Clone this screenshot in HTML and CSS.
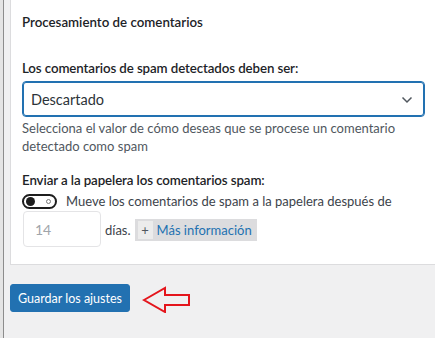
FILE: index.html
```html
<!DOCTYPE html>
<html lang="es">
<head>
  <meta charset="UTF-8">
  <title>Procesamiento de comentarios</title>
  <link rel="stylesheet" href="styles.css">
</head>
<body>
  <div class="frame">
    <div class="settings-panel">
      <h2 class="panel-title">Procesamiento de comentarios</h2>

      <label class="field-label" for="spamAction">Los comentarios de spam detectados deben ser:</label>
      <div class="select-wrap">
        <select class="select" id="spamAction">
          <option>Descartado</option>
        </select>
        <svg class="chevron" width="12" height="8" viewBox="0 0 12 8"><path d="M1.5 1.5 6 6l4.5-4.5" fill="none" stroke="#50575e" stroke-width="1.5"/></svg>
      </div>
      <p class="field-help">Selecciona el valor de cómo deseas que se procese un comentario detectado como spam</p>

      <div class="field-label trash-label">Enviar a la papelera los comentarios spam:</div>
      <div class="toggle-row">
        <span class="toggle"><span class="knob"></span><span class="off-dot"></span></span>
        <span>Mueve los comentarios de spam a la papelera después de</span>
      </div>
      <div class="days-row">
        <input class="days-input" type="text" value="14">
        <span class="days-text">días.</span>
        <a class="more-link" href="#"><span class="plus">+</span>Más información</a>
      </div>
    </div>

    <div class="actions">
      <button class="save-btn">Guardar los ajustes</button>
      <svg class="arrow" width="50" height="28" viewBox="0 0 50 28"><path d="M2 15 23 3v7h24v10H23v7z" fill="none" stroke="#e4151c" stroke-width="2" stroke-linejoin="miter"/></svg>
    </div>
  </div>
</body>
</html>
```

FILE: styles.css
```css
body {
  margin: 0;
  padding-left: 3px;
  background: #e4e4e4;
  font-family: Lato, "Open Sans", sans-serif;
  color: #1d2327;
  font-size: 13px;
}

.frame {
  min-height: 338px;
  box-sizing: border-box;
  border-left: 1px solid #8c8c8c;
  background: #f0f0f1;
  padding-left: 6px;
}

.settings-panel {
  background: #fff;
  border: 1px solid #dcdcde;
  border-top: none;
  border-right: none;
  padding: 12px 10px 17px 11px;
}

.panel-title {
  margin: 0 0 26px;
  font-size: 13.3px;
  font-weight: 600;
  line-height: 20px;
}

.field-label {
  display: block;
  font-size: 13.3px;
  font-weight: 600;
  letter-spacing: -0.1px;
  line-height: 20px;
  margin-bottom: 3px;
}

.select-wrap {
  position: relative;
  width: 403px;
}

.select {
  appearance: none;
  width: 100%;
  height: 36px;
  box-sizing: border-box;
  border: 1px solid #2271b1;
  border-radius: 4px;
  box-shadow: 0 0 0 1px #2271b1 inset;
  background: #fff;
  padding: 0 30px 0 8px;
  font-family: inherit;
  font-size: 14.5px;
  color: #2c3338;
}

.chevron {
  position: absolute;
  right: 12px;
  top: 15px;
}

.field-help {
  margin: 2px 0 0;
  color: #50575e;
  line-height: 18px;
}

.trash-label {
  margin: 15px 0 1px;
}

.toggle-row {
  display: flex;
  align-items: center;
  gap: 9px;
  line-height: 20px;
  color: #3c434a;
}

.toggle {
  position: relative;
  width: 31px;
  height: 11px;
  border: 2px solid #1e1e1e;
  border-radius: 9px;
  flex-shrink: 0;
}

.knob {
  position: absolute;
  left: 2px;
  top: 1px;
  width: 9px;
  height: 9px;
  border-radius: 50%;
  background: #1e1e1e;
}

.off-dot {
  position: absolute;
  right: 4px;
  top: 3px;
  width: 3px;
  height: 3px;
  border: 1px solid #777;
  border-radius: 50%;
}

.days-row {
  display: flex;
  align-items: center;
  gap: 4px;
}

.days-input {
  width: 78px;
  height: 36px;
  box-sizing: border-box;
  margin-left: 1px;
  border: 1px solid #e4e4e6;
  border-radius: 4px;
  padding: 0 11px;
  font-family: inherit;
  font-size: 14px;
  color: #a0a5aa;
}

.days-text {
  color: #3c434a;
  margin-top: 2px;
}

.more-link {
  display: flex;
  align-items: center;
  gap: 4px;
  margin-left: 0;
  margin-top: 2px;
  height: 22px;
  padding: 0 5px 0 3px;
  background: #dcdcde;
  color: #2271b1;
  text-decoration: none;
}

.plus {
  width: 15px;
  height: 18px;
  background: #ececec;
  color: #50575e;
  text-align: center;
  line-height: 18px;
}

.actions {
  display: flex;
  align-items: center;
  gap: 12px;
  padding-top: 18px;
}

.save-btn {
  width: 120px;
  height: 28px;
  background: #2271b1;
  border: 1px solid #2271b1;
  border-radius: 3px;
  color: #fff;
  font-family: inherit;
  font-size: 12.5px;
  padding: 0;
}

.arrow {
  margin-top: 2px;
}
```
